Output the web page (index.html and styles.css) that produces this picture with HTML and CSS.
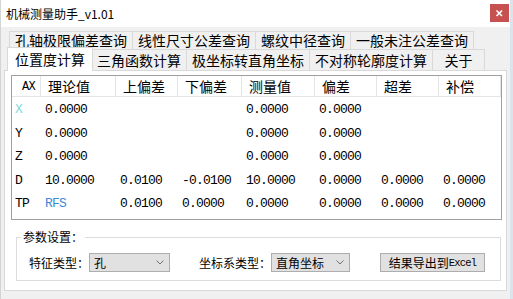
FILE: index.html
```html
<!DOCTYPE html>
<html>
<head>
<meta charset="utf-8">
<link rel="stylesheet" href="styles.css">
</head>
<body>
<div class="window">
  <div class="titlebar">
    <span class="title">机械测量助手_v1.01</span>
    <span class="close"><svg width="19" height="18" viewBox="0 0 19 18"><path d="M6.5 6.5 L12 12 M12 6.5 L6.5 12" stroke="#fff" stroke-width="1.7" fill="none"/></svg></span>
  </div>
  <div class="tabctl">
    <div class="tabrow back">
      <div class="tab">孔轴极限偏差查询</div>
      <div class="tab">线性尺寸公差查询</div>
      <div class="tab">螺纹中径查询</div>
      <div class="tab">一般未注公差查询</div>
    </div>
    <div class="tabrow front">
      <div class="tab sel">位置度计算</div>
      <div class="tab">三角函数计算</div>
      <div class="tab">极坐标转直角坐标</div>
      <div class="tab">不对称轮廓度计算</div>
      <div class="tab short">关于</div>
    </div>
    <div class="page">
      <div class="table">
        <div class="grid head">
          <div class="hc ax">AX</div>
          <div class="hc">理论值</div>
          <div class="hc">上偏差</div>
          <div class="hc">下偏差</div>
          <div class="hc">测量值</div>
          <div class="hc">偏差</div>
          <div class="hc">超差</div>
          <div class="hc">补偿</div>
        </div>
        <div class="grid row">
          <div class="c cyan">X</div><div class="c">0.0000</div><div class="c"></div><div class="c"></div><div class="c">0.0000</div><div class="c">0.0000</div><div class="c"></div><div class="c"></div>
        </div>
        <div class="grid row">
          <div class="c">Y</div><div class="c">0.0000</div><div class="c"></div><div class="c"></div><div class="c">0.0000</div><div class="c">0.0000</div><div class="c"></div><div class="c"></div>
        </div>
        <div class="grid row">
          <div class="c">Z</div><div class="c">0.0000</div><div class="c"></div><div class="c"></div><div class="c">0.0000</div><div class="c">0.0000</div><div class="c"></div><div class="c"></div>
        </div>
        <div class="grid row">
          <div class="c">D</div><div class="c">10.0000</div><div class="c">0.0100</div><div class="c">-0.0100</div><div class="c">10.0000</div><div class="c">0.0000</div><div class="c">0.0000</div><div class="c">0.0000</div>
        </div>
        <div class="grid row">
          <div class="c">TP</div><div class="c blue">RFS</div><div class="c">0.0100</div><div class="c">0.0000</div><div class="c">0.0000</div><div class="c">0.0000</div><div class="c">0.0000</div><div class="c">0.0000</div>
        </div>
      </div>
      <fieldset class="group">
        <legend class="legend">参数设置：</legend>
        <div class="params">
          <span class="lbl">特征类型：</span>
          <div class="combo c1"><span>孔</span><svg width="8" height="5" viewBox="0 0 8 5"><polyline points="0.5,0.5 4,4 7.5,0.5" fill="none" stroke="#707070" stroke-width="1"/></svg></div>
          <span class="lbl l2">坐标系类型：</span>
          <div class="combo c2"><span>直角坐标</span><svg width="8" height="5" viewBox="0 0 8 5"><polyline points="0.5,0.5 4,4 7.5,0.5" fill="none" stroke="#707070" stroke-width="1"/></svg></div>
          <div class="btn">结果导出到<span class="mono">Excel</span></div>
        </div>
      </fieldset>
    </div>
  </div>
</div>
</body>
</html>
```
FILE: styles.css
```css
* { box-sizing: border-box; }
html, body { margin: 0; padding: 0; }
body {
  width: 513px;
  height: 299px;
  overflow: hidden;
  background: #dde3ea;
  font-family: "Noto Sans CJK SC", "Noto Sans", sans-serif;
  color: #000;
}
.window {
  width: 510px;
  height: 299px;
  background: #f0f0f0;
  border-left: 1px solid #d4d4d4;
}
.titlebar {
  height: 27px;
  background: #fff;
  display: flex;
  align-items: center;
  padding-left: 5px;
}
.title {
  font-size: 12px;
  line-height: 16px;
}
.close {
  margin-left: auto;
  margin-right: 1px;
  align-self: flex-start;
  margin-top: 4px;
  width: 19px;
  height: 18px;
  background: #c75050;
  display: flex;
}
.tabctl {
  padding-top: 4px;
  margin-left: 3px;
  width: 503px;
}
.tabrow {
  display: flex;
  padding-left: 5px;
}
.tab {
  font-size: 14px;
  padding: 0 5px;
  border: 1px solid #d9d9d9;
  border-bottom: none;
  background: #f0f0f0;
  text-align: center;
  white-space: nowrap;
}
.tab + .tab { margin-left: -1px; }
.back .tab {
  height: 18px;
  line-height: 17px;
}
.front .tab {
  height: 21px;
  line-height: 20px;
}
.front .tab.sel {
  position: relative;
  z-index: 2;
  background: #fff;
  height: 24px;
  margin-top: -2px;
  margin-bottom: -1px;
  margin-left: -2px;
  margin-right: -2px;
  padding: 0 7px;
  line-height: 22px;
}
.front .tab.sel + .tab { margin-left: 0; }
.tab.short { min-width: 53px; }
.page {
  height: 221px;
  background: #fff;
  border: 1px solid #d9d9d9;
  padding: 4px 4px 0 6px;
}
.table {
  height: 145px;
  border: 1px solid #a0a0a0;
  background: #fff;
}
.grid {
  display: grid;
  grid-template-columns: 29px 75px 62px 64px 73px 62px 62px 62px;
}
.head {
  height: 21px;
  border-bottom: 1px solid #e5e5e5;
}
.hc {
  font-size: 14px;
  line-height: 20px;
  padding-left: 7px;
  border-right: 1px solid #e5e5e5;
  white-space: nowrap;
}
.hc.ax {
  font-family: "Liberation Mono", monospace;
  font-size: 12px;
  letter-spacing: -0.7px;
  padding-left: 10px;
  padding-top: 1px;
}
.c {
  font-family: "Liberation Mono", monospace;
  font-size: 13px;
  letter-spacing: -0.8px;
  height: 23.5px;
  line-height: 21.5px;
  padding-top: 2px;
  padding-left: 4px;
  white-space: nowrap;
}
.c:first-child { padding-left: 3px; }
.cyan { color: #86dcdc; }
.blue { color: #3b8ad6; }
.group {
  margin: 9px 1px 0 5px;
  padding: 0 0 8px 0;
  border: 1px solid #dcdcdc;
  min-width: 0;
}
.legend {
  font-size: 12px;
  line-height: 16px;
  padding: 0 2px;
  margin-left: 4px;
}
.params {
  display: flex;
  align-items: center;
  height: 19px;
  margin-top: 8px;
  padding-left: 12px;
}
.lbl {
  font-size: 12px;
  line-height: 16px;
  white-space: nowrap;
}
.combo {
  height: 19px;
  background: #e1e1e1;
  border: 1px solid #adadad;
  display: flex;
  align-items: center;
  justify-content: space-between;
  padding: 0 5px 0 4px;
  font-size: 12px;
  line-height: 16px;
}
.c1 { width: 81px; }
.c2 { width: 79px; }
.l2 { margin-left: 29px; }
.btn {
  margin-left: 30px;
  width: 105px;
  height: 19px;
  background: #e1e1e1;
  border: 1px solid #adadad;
  font-size: 12px;
  line-height: 16px;
  display: flex;
  align-items: center;
  justify-content: center;
  white-space: nowrap;
}
.mono {
  font-family: "Liberation Mono", monospace;
  font-size: 10.5px;
  letter-spacing: -0.8px;
}
```
